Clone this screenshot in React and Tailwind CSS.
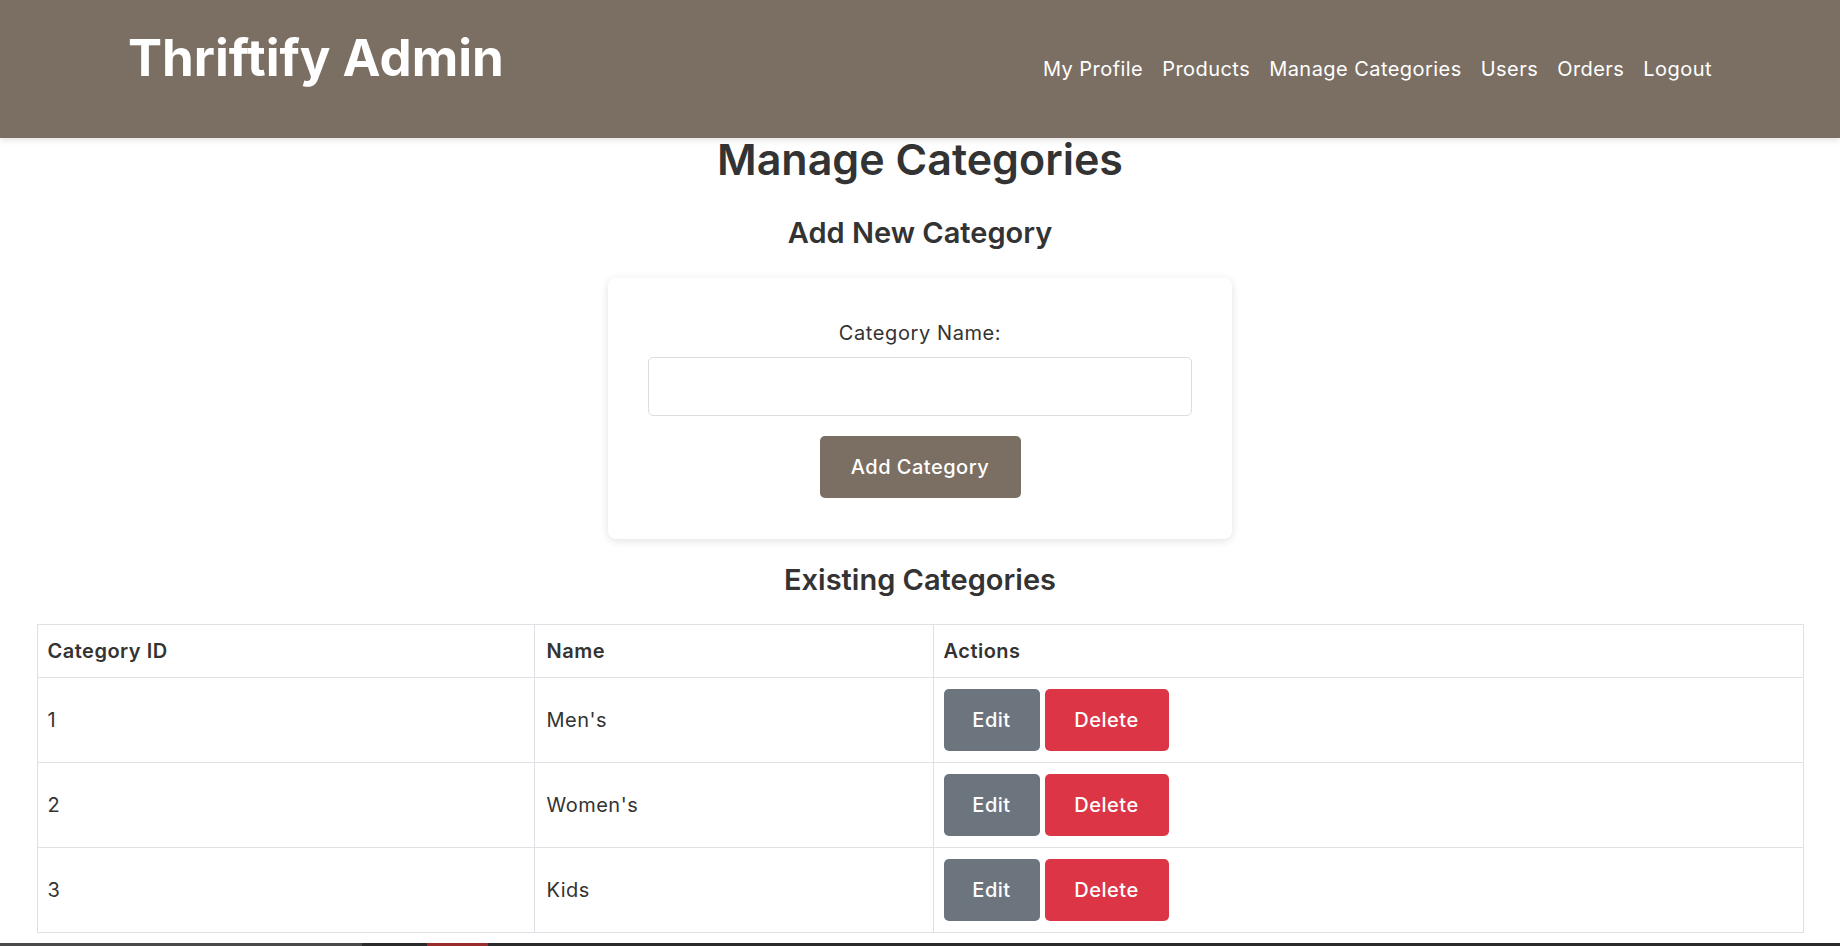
import { useState } from 'react';

const NAV = ['My Profile', 'Products', 'Manage Categories', 'Users', 'Orders', 'Logout'];

const CATEGORIES = [
  { id: 1, name: "Men's" },
  { id: 2, name: "Women's" },
  { id: 3, name: 'Kids' },
];

const App = () => {
  const [name, setName] = useState('');

  return (
    <div className="min-h-screen bg-white text-[#333] font-['Inter','Noto_Sans',sans-serif]">
      <header className="h-[138px] bg-[#7b6f63] shadow-[0_2px_6px_rgba(0,0,0,0.12)] flex justify-between px-[128px]">
        <h1 className="mt-[28px] text-[51px] leading-[60px] font-bold text-white">Thriftify Admin</h1>
        <nav className="mt-[56px] flex gap-[19px] h-[26px] items-center">
          {NAV.map((n) => (
            <a key={n} href="#" className="text-white text-[20px] tracking-[0.45px]">
              {n}
            </a>
          ))}
        </nav>
      </header>

      <main className="flex flex-col items-center">
        <h2 className="mt-[-2px] text-[43px] leading-[46px] font-semibold">Manage Categories</h2>
        <h3 className="mt-[35px] text-[29px] leading-[32px] font-semibold">Add New Category</h3>

        <div className="mt-[29px] w-[624px] rounded-lg bg-white shadow-[0_2px_8px_rgba(0,0,0,0.12)] px-[40px] pt-[43px] pb-[41px] flex flex-col items-center">
          <label className="text-[20px] leading-[24px] tracking-[0.6px]">Category Name:</label>
          <input
            value={name}
            onChange={(e) => setName(e.target.value)}
            className="mt-[12px] w-full h-[59px] border border-[#ddd] rounded-[5px] px-3 outline-none"
          />
          <button className="mt-[20px] w-[201px] h-[62px] rounded-[5px] bg-[#7b6f63] text-white text-[20px] tracking-[0.5px] font-medium">
            Add Category
          </button>
        </div>

        <h3 className="mt-[25px] text-[29px] leading-[32px] font-semibold">Existing Categories</h3>

        <table className="mt-[28px] w-[1767px] border-collapse text-[20px] tracking-[0.5px]">
          <thead>
            <tr className="h-[53px]">
              <th className="w-[497px] border border-[#dee2e6] px-[10px] text-left font-semibold">Category ID</th>
              <th className="w-[399px] border border-[#dee2e6] px-[12px] text-left font-semibold">Name</th>
              <th className="border border-[#dee2e6] px-[10px] text-left font-semibold">Actions</th>
            </tr>
          </thead>
          <tbody>
            {CATEGORIES.map((c) => (
              <tr key={c.id} className="h-[85px]">
                <td className="border border-[#dee2e6] px-[10px]">{c.id}</td>
                <td className="border border-[#dee2e6] px-[12px]">{c.name}</td>
                <td className="border border-[#dee2e6] px-[10px]">
                  <div className="flex gap-[5px]">
                    <button className="w-[96px] h-[62px] rounded-[5px] bg-[#6c757d] text-white text-[20px] font-medium">Edit</button>
                    <button className="w-[124px] h-[62px] rounded-[5px] bg-[#dc3545] text-white text-[20px] font-medium">Delete</button>
                  </div>
                </td>
              </tr>
            ))}
          </tbody>
        </table>
      </main>

      <footer className="mt-[10px] bg-[#2b2b2b] h-[120px] flex items-start">
        <div className="w-[362px] h-[4px] bg-[#4a4a4a]" />
        <div className="ml-[65px] w-[61px] h-[4px] bg-[#9b2c2c]" />
      </footer>
    </div>
  );
};

export default App;
